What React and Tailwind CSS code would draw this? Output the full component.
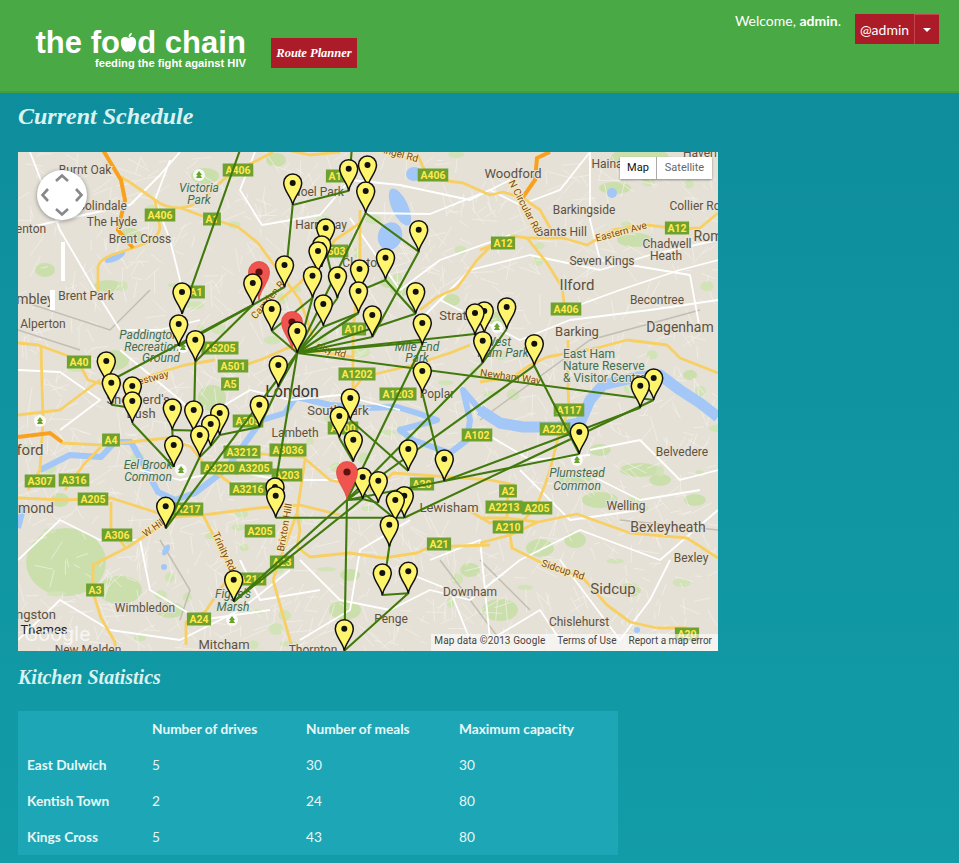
import React from 'react';

// map data is in page coordinates, the svg viewBox starts at the map corner
const yellowRoads = [
  'M98,300 L98,267 Q100,258 118,253 L133,248 L146,243 Q158,238 160,228 L155,200 L131,183 L121,177',
  'M155,200 Q165,208 181,208 L205,217 L238,227 L258,243 L280,273 L300,300 L313,337',
  'M181,208 Q200,205 212,190 L231,173 L258,160 L273,152',
  'M287,150 L310,155 L340,152',
  'M417,153 L423,167 Q430,178 440,180 L463,183 L490,195 L503,192 L523,198 L540,210 L553,233 L563,238',
  'M480,250 L493,245 L513,236 L527,238 L563,238 L587,245 L613,230 L647,225 L680,229 L700,228 L718,213',
  'M527,238 L547,263 L562,287 L565,310',
  'M420,310 L437,297 L457,288 L477,260 L490,247 L493,245',
  'M547,357 L597,348 L627,340 L667,345 L680,358 L718,373',
  'M480,382 L513,377 L530,365 L547,357',
  'M568,340 L568,387 L569,410 L560,430 L550,470 L545,485',
  'M230,370 L260,360 L290,347 L340,355 L353,357',
  'M353,330 L353,390 L363,377 L413,365 L450,353 L470,345',
  'M360,210 L360,267 L353,330',
  'M360,223 L335,240 L300,283 L280,300',
  'M18,343 L38,345 L71,357 L81,367 L88,380 L105,385 L130,384 L145,378 L168,370 L185,365 L215,360',
  'M41,347 L43,420 L40,470 L28,490',
  'M61,443 L101,445 L168,438 L191,447 L205,465 L240,490',
  'M101,447 L85,463 L65,490',
  'M18,498 L65,500 L111,498 L158,513 L175,517 L203,515 L258,508 L300,505 L340,515',
  'M166,522 L128,547 L93,565 L93,592 L101,618 L115,642 L115,651',
  'M111,502 L111,528 L125,547',
  'M203,515 L225,558 L235,568 L205,612 L186,622 L186,645',
  'M273,580 L293,651',
  'M273,580 L281,557 L297,513 L305,460',
  'M297,547 L310,557 L350,553 L383,558 L417,553 L430,547 L490,545',
  'M480,518 L507,518 L537,522',
  'M480,543 L510,535 L538,522 L577,514 L630,533 L687,538 L718,558',
  'M510,535 L512,548 L540,562 L583,578 L607,605 L630,622 L657,628 L687,628',
  'M508,485 L507,518',
  'M545,485 L537,505 L513,532',
  'M463,507 L490,523 L507,518',
  'M250,453 L303,457 L330,480 L375,490 L393,473 L490,480 L515,485',
  'M297,513 L300,530 L297,547',
  'M18,415 L60,410 L100,380',
];

const whiteRoads = [
  'M30,152 L60,230 L95,290 L120,330 L160,330 L200,320',
  'M18,230 L70,218 L130,205 L160,175 L180,152',
  'M170,160 L155,200 L170,240 L185,300',
  'M255,152 L240,190 L262,225 L320,215 L350,180 L400,185 L470,200 L510,180',
  'M365,213 L430,214 L490,190 L520,205 L560,190 L590,152',
  'M350,218 L400,290 L440,260 L510,235',
  'M420,320 L470,270 L530,255 L600,270 L650,255 L718,240',
  'M565,310 L620,290 L680,270 L718,260',
  'M590,152 L590,220 L600,260 L690,275 L700,330',
  'M440,300 L520,340 L570,320 L650,310 L718,300',
  'M18,370 L60,372 L100,400 L60,430',
  'M120,350 L180,400 L200,420 L250,390 L290,400 L340,395 L400,410',
  'M140,470 L180,480 L230,470 L280,480 L340,480',
  'M18,560 L60,520 L100,540 L140,540 L150,590 L200,620 L270,610',
  'M18,640 L60,600 L110,630 L180,640 L240,610 L290,570',
  'M300,560 L340,600 L390,610 L430,590 L470,600 L520,560 L580,530 L660,560 L718,510',
  'M430,560 L480,540 L490,640 L540,610 L560,640',
  'M560,560 L620,640 L650,600 L670,560',
  'M590,450 L640,440 L680,480 L718,470',
  'M580,470 L640,500 L700,490',
  'M520,470 L570,520 L640,510',
  'M480,430 L530,460 L590,455',
  'M400,570 L450,590 L470,640',
  'M300,640 L350,610 L360,550 L410,520',
  'M240,560 L260,600 L320,590',
];

const parks = [
  [66, 562, 40, 34], [120, 590, 22, 14], [130, 236, 12, 8], [108, 286, 14, 6], [205, 176, 14, 8],
  [388, 282, 8, 6], [276, 160, 10, 7], [400, 290, 10, 6], [452, 300, 8, 6], [635, 240, 18, 7],
  [640, 160, 30, 14], [615, 188, 16, 6], [500, 318, 12, 8], [115, 360, 14, 10], [212, 398, 14, 13],
  [575, 478, 16, 7], [600, 500, 18, 8], [540, 548, 14, 9], [575, 540, 11, 8], [630, 590, 11, 7],
  [345, 610, 16, 10], [350, 575, 10, 6], [470, 570, 10, 7], [500, 610, 18, 11], [640, 470, 20, 7],
  [695, 500, 11, 6], [690, 375, 7, 5], [60, 500, 9, 7], [170, 610, 14, 8], [45, 270, 10, 7],
  [600, 450, 11, 6], [660, 480, 11, 6],
];

const lakes = [
  [400, 207, 8, 20, -25], [390, 236, 12, 14, 20], [414, 174, 8, 7, 0], [115, 257, 11, 4, -25],
  [612, 193, 5, 5, 0], [166, 550, 3, 6, 30], [164, 567, 3, 3, 0], [637, 630, 3, 3, 0],
];

const shields = [
  ['A406', 238, 170], ['A406', 160, 215], ['A1', 212, 219], ['A406', 433, 175], ['A10', 338, 176],
  ['A12', 503, 243], ['A12', 677, 228], ['A406', 566, 309], ['A5205', 220, 348], ['A40', 79, 362],
  ['A501', 233, 366], ['A5', 230, 384], ['A4', 111, 440], ['A307', 40, 481], ['A316', 74, 480],
  ['A3212', 242, 452], ['A3220', 219, 468], ['A3205', 254, 468], ['A3216', 248, 489], ['A3036', 288, 450],
  ['A203', 287, 475], ['A205', 93, 499], ['A217', 188, 509], ['A306', 117, 535], ['A3', 95, 590],
  ['A24', 199, 619], ['A205', 260, 531], ['A23', 282, 562], ['A214', 251, 579], ['A10', 354, 329],
  ['A1202', 357, 374], ['A1203', 398, 394], ['A100', 343, 428], ['A102', 477, 435], ['A20', 422, 484],
  ['A21', 439, 544], ['A2', 508, 491], ['A2213', 504, 507], ['A205', 537, 508], ['A210', 508, 527],
  ['A117', 569, 410], ['A220', 555, 429], ['A20', 687, 634], ['A1', 196, 292], ['A503', 333, 251],
  ['A305', 248, 421],
];

// [text, x, y, size]
const labels = [
  ['Burnt Oak', 85, 174], ['Colindale', 102, 210], ['The Hyde', 112, 226], ['Brent Cross', 140, 243],
  ['Brent Park', 86, 300], ['mbley', 35, 304, 14], ['Alperton', 43, 328], ['enton', 31, 233], ['Noel Park', 318, 196],
  ['Harringay', 321, 229], ['Clapton', 363, 267], ['Woodford', 513, 178, 13], ['Haina', 607, 168], ['Barkingside', 584, 214],
  ['Gants Hill', 561, 236], ['Chadwell', 667, 248], ['Heath', 666, 260], ['Seven Kings', 602, 265], ['Ilford', 577, 290, 15],
  ['Becontree', 657, 304], ['Collier Ro', 695, 210], ['Rom', 708, 241, 14], ['Haveri', 700, 157], ['Dagenham', 680, 332, 14],
  ['Barking', 577, 336, 13], ['Belvedere', 682, 456], ['Welling', 626, 510], ['Bexleyheath', 668, 532, 14], ['Bexley', 691, 562],
  ['Sidcup', 613, 594, 15], ['Chislehurst', 579, 626], ['Lewisham', 449, 512, 13], ['Downham', 470, 596], ['Penge', 391, 623],
  ['Mitcham', 224, 649, 13], ['Wimbledon', 145, 612], ['ngston', 36, 619, 13], ['New Malden', 88, 654], ['mond', 36, 513, 14],
  ['ford', 30, 455, 15], ["Shepherd's", 138, 404, 13], ['Bush', 141, 418, 13], ['Lambeth', 295, 437], ['Southwark', 338, 415, 13],
  ['Poplar', 437, 398], ['Strat', 453, 320, 13], ['Thornton', 313, 654],
];

const parkLabels = [
  ['Victoria', 199, 192], ['Park', 199, 204], ['Paddington', 149, 339], ['Recreation', 152, 351], ['Ground', 161, 362],
  ['Mile End', 417, 351], ['Park', 417, 362], ['West', 498, 346], ['Ham Park', 503, 357], ['Eel Brook', 148, 469],
  ['Common', 148, 481], ['Figge\'s', 233, 598], ['Marsh', 233, 611], ['Plumstead', 577, 477], ['Common', 577, 490],
];

const roadNames = [
  ['Trinity Rd', 221, 553, 65], ['W Hill', 156, 530, -35], ['Sidcup Rd', 562, 573, 18], ['N Circular Rd', 522, 208, 62],
  ['Westway', 150, 382, -15], ['Newham Way', 510, 380, 8], ['Angel Rd', 398, 157, 15], ['City Rd', 330, 354, 15],
  ['Camden Rd', 272, 300, -50], ['Brixton Hill', 288, 528, -80], ['Eastern Ave', 622, 235, -15],
];

const routes = [
  [[262, 150], [240, 150], [182, 314]],
  [[106, 383], [252.8, 305]], [[178.7, 346], [252.8, 305]], [[195.3, 361.7], [252.8, 305]],
  [[195.3, 361.7], [193.7, 432]], [[111.3, 404.7], [132.3, 408]], [[132.3, 423], [173.7, 467]],
  [[173.7, 467], [172.3, 430], [210.7, 431]], [[199.7, 457], [210.7, 446], [219.7, 435], [259.3, 427], [278.3, 387], [297.3, 353]],
  [[297.3, 353], [275, 487]], [[275.7, 517.7], [404.3, 517.7]], [[404.3, 517.7], [653.7, 400]],
  [[297.3, 353], [653.7, 400]],
  [[534.3, 365.7], [579.3, 454]], [[534.3, 365.7], [347, 500]], [[482.7, 362.7], [347, 500]], [[422.3, 345], [347, 500]],
  [[482.7, 362.7], [506.7, 329]], [[482.7, 362.7], [475, 335]], [[482.7, 362.7], [484.3, 333]],
  [[297.3, 353], [358.5, 313]], [[297.3, 353], [415.7, 313.7]], [[297.3, 353], [372.3, 337]], [[297.3, 353], [422.3, 342]],
  [[297.3, 353], [484.3, 333]], [[297.3, 353], [323, 327]], [[297.3, 353], [365.7, 213]], [[297.3, 353], [312.5, 297.7]],
  [[297.3, 353], [337.5, 298]], [[297.3, 353], [271.7, 331]], [[271.7, 331], [312.5, 297.7], [318, 273]],
  [[325.7, 250], [337.5, 298]], [[252.8, 305], [284.5, 287], [292.7, 205], [348.7, 190.7], [351.7, 150]],
  [[365.7, 213], [418.7, 251.7], [372.3, 337]], [[385.5, 280], [359, 291]], [[385.5, 280], [415.7, 313.7]],
  [[358.5, 313], [323, 327]], [[353.3, 461.7], [339.3, 438]], [[350.3, 420], [408.3, 471]], [[422.3, 393], [444.3, 481]],
  [[347, 500], [444.3, 481], [579.3, 454]], [[444.3, 481], [640.3, 407.7]], [[347, 500], [362.7, 499], [378.3, 503]],
  [[362, 492], [395.3, 519], [389.3, 546.7], [382.3, 595], [408.3, 593.3], [344.3, 650.7]], [[347, 500], [344.3, 650.7]],
  [[233.7, 601.7], [347, 500]], [[233.7, 601.7], [362.7, 499]], [[165.7, 528.3], [199.7, 457]], [[165.7, 528.3], [297.3, 353]],
];

const yellowPins = [
  [292.7, 205], [348.7, 190.7], [367.5, 187], [365.7, 213], [418.7, 251.7], [325.7, 250], [321.7, 267], [318, 273],
  [284.5, 287], [312.5, 297.7], [337.5, 298], [359.5, 291], [385.5, 279.7], [358.5, 313], [415.7, 313.7], [323.3, 326],
  [372.3, 337], [422.3, 345], [271.7, 331], [475, 335], [484.3, 333], [252.8, 305], [506.7, 329], [182, 314],
  [178.7, 346], [195.3, 361.7], [106.3, 383], [111.3, 404.7], [132.3, 408], [132.3, 423], [172.3, 430], [193.7, 432],
  [219.7, 435], [210.7, 446], [199.7, 457], [173.7, 467], [259.3, 426.7], [278.3, 387], [297.3, 353], [422.3, 393],
  [350.3, 420], [339.3, 438], [353.3, 461.7], [408.3, 471], [444.3, 481], [362.7, 499], [378.3, 502.7], [404.3, 517.7],
  [395.3, 522], [389.3, 546.7], [275, 509], [275.7, 517.7], [382.3, 595], [408.3, 593.3], [344.3, 650.7], [534.3, 365.7],
  [482.7, 362.7], [653.7, 400], [640.3, 407.7], [579.3, 454], [165.7, 528.3], [233.7, 601.7],
];
const redPins = [[259, 300], [292, 350], [347, 500]];

const stats = [
  ['East Dulwich', 5, 30, 30],
  ['Kentish Town', 2, 24, 80],
  ['Kings Cross', 5, 43, 80],
];

// street mesh and small green patches, seeded so every render gives the same picture
function makeTexture() {
  let seed = 4217;
  const rnd = () => {
    seed = (seed * 16807) % 2147483647;
    return seed / 2147483647;
  };
  let streets = '';
  for (let i = 0; i < 1500; i++) {
    const x = 18 + rnd() * 700;
    const y = 152 + rnd() * 499;
    const a = rnd() * Math.PI;
    const l = 6 + rnd() * 20;
    streets += `M${x.toFixed(1)},${y.toFixed(1)}l${(Math.cos(a) * l).toFixed(1)},${(Math.sin(a) * l).toFixed(1)}`;
  }
  const patches = [];
  for (let i = 0; i < 90; i++) {
    patches.push([18 + rnd() * 700, 152 + rnd() * 499, 3 + rnd() * 7, 2 + rnd() * 4]);
  }
  return { streets, patches };
}
const texture = makeTexture();

const labelClass = 'font-["Roboto",sans-serif] fill-[#5f5140] stroke-[#e6e2d8] stroke-[2px] [paint-order:stroke]';
const parkClass = 'font-["Roboto",sans-serif] fill-[#3f6f52] stroke-[#e6e2d8] stroke-[2px] [paint-order:stroke]';

const Pin = ({ x, y }) => (
  <g transform={`translate(${x},${y})`}>
    <path d="M0,0 C-1,-8 -9,-14 -9,-22 A9,9 0 1 1 9,-22 C9,-14 1,-8 0,0Z" fill="#fff56c" stroke="#111" strokeWidth="1.5" />
    <circle cy="-22" r="3" fill="#111" />
  </g>
);

const RedPin = ({ x, y }) => (
  <g transform={`translate(${x},${y})`}>
    <path d="M0,0 C-1,-10 -10.5,-18 -10.5,-28 A10.5,10.5 0 1 1 10.5,-28 C10.5,-18 1,-10 0,0Z" fill="#f0544e" stroke="#d8423c" strokeWidth="0.7" />
    <circle cy="-28" r="3.6" fill="#5c1210" />
  </g>
);

const MapDrawing = () => {
  const pins = [
    ...yellowPins.map(([x, y]) => ({ x, y, red: false })),
    ...redPins.map(([x, y]) => ({ x, y, red: true })),
  ].sort((a, b) => a.y - b.y);

  return (
    <svg viewBox="18 152 700 499" className="block w-[700px] h-[499px]">
      <rect x="18" y="152" width="700" height="499" fill="#e5e1d7" />
      {parks.map(([cx, cy, rx, ry], i) => (
        <ellipse key={i} cx={cx} cy={cy} rx={rx} ry={ry} fill="#cbdfac" />
      ))}
      {texture.patches.map(([cx, cy, rx, ry], i) => (
        <ellipse key={i} cx={cx} cy={cy} rx={rx} ry={ry} fill="#d2e3b8" />
      ))}
      <path d={texture.streets} stroke="#f6f4ee" strokeWidth="0.7" fill="none" opacity="0.85" />
      <path d="M18,300 L110,330 L150,290 M18,330 L80,350 M700,310 L590,340 L480,420 M480,560 L530,610 M160,540 L190,590 L180,620 M500,640 L440,560 M620,520 L718,530" stroke="#c2beb4" strokeWidth="1.5" fill="none" />
      {/* thames */}
      <path
        d="M18,528 L24,505 M40,470 L70,455 L101,457 L115,442 L131,442 L141,460 L158,492 L175,500 L195,493 L225,470 L240,450 L262,420 L285,413 L296,397 L330,405 L367,408 L397,407 L417,413 L437,420 L400,430 L413,440 L450,453 L467,440 L470,420 L463,390 L480,410 L500,423"
        stroke="#a3c7f7"
        strokeWidth="6"
        strokeLinejoin="round"
        fill="none"
      />
      <path
        d="M480,410 L500,423 L523,427 L557,427 L580,423 L590,400 L603,385 L637,377 L660,375 L680,390 L700,403 L718,417"
        stroke="#a3c7f7"
        strokeWidth="11"
        strokeLinejoin="round"
        fill="none"
      />
      {lakes.map(([cx, cy, rx, ry, rot], i) => (
        <ellipse key={i} cx={cx} cy={cy} rx={rx} ry={ry} fill="#a3c7f7" transform={`rotate(${rot} ${cx} ${cy})`} />
      ))}
      {whiteRoads.map((d, i) => (
        <path key={i} d={d} stroke="#fff" strokeWidth="1.8" strokeLinejoin="round" fill="none" />
      ))}
      {yellowRoads.map((d, i) => (
        <path key={i} d={d} stroke="#f8cf62" strokeWidth="2.8" strokeLinejoin="round" fill="none" />
      ))}
      <path d="M103,150 L121,180 L125,200 L118,230 L133,248" stroke="#f9a11f" strokeWidth="4" fill="none" />
      <path d="M550,152 L537,158 L535,180 L523,197" stroke="#f9a11f" strokeWidth="4" fill="none" />
      <path d="M18,437 L50,433 L62,442" stroke="#f9a11f" strokeWidth="4" fill="none" />

      {labels.map(([t, x, y, size], i) => (
        <text key={i} x={x} y={y} textAnchor="middle" fontSize={size || 12} className={labelClass}>{t}</text>
      ))}
      {parkLabels.map(([t, x, y], i) => (
        <text key={i} x={x} y={y} textAnchor="middle" fontSize="12" fontStyle="italic" className={parkClass}>{t}</text>
      ))}
      <text x="563" y="358" fontSize="12" className={parkClass}>East Ham</text>
      <text x="563" y="370" fontSize="12" className={parkClass}>Nature Reserve</text>
      <text x="563" y="382" fontSize="12" className={parkClass}>&amp; Visitor Centre</text>
      {roadNames.map(([t, x, y, rot], i) => (
        <text key={i} x={x} y={y} textAnchor="middle" fontSize="10" transform={`rotate(${rot} ${x} ${y})`} className='font-["Roboto",sans-serif] fill-[#7a4a1c] stroke-[#f9e7b0] stroke-[2px] [paint-order:stroke]'>{t}</text>
      ))}
      <text x="292" y="397" textAnchor="middle" fontSize="16" className='font-["Roboto",sans-serif] fill-[#333] stroke-[#e6e2d8] stroke-[2px] [paint-order:stroke]'>London</text>
      <text x="44" y="634" textAnchor="middle" fontSize="13" className='font-["Roboto",sans-serif] fill-[#222] stroke-[#e6e2d8] stroke-[2px] [paint-order:stroke]'>Thames</text>

      {[[199, 175], [181, 470], [40, 421], [232, 620], [577, 460], [497, 327], [183, 347]].map(([x, y], i) => (
        <g key={i}>
          <circle cx={x} cy={y} r="6" fill="#fff" opacity="0.85" />
          <path d={`M${x},${y - 4} l3,4 h-1.6 l1.6,3 h-6 l1.6,-3 h-1.6z`} fill="#6aa32c" />
        </g>
      ))}

      {shields.map(([t, x, y], i) => {
        const w = t.length * 6.4 + 5;
        return (
          <g key={i}>
            <rect x={x - w / 2} y={y - 6.5} width={w} height="13" fill="#6fa12e" />
            <text x={x} y={y + 4} textAnchor="middle" fontSize="10.5" fontWeight="700" className='font-["Roboto",sans-serif] fill-[#ffe94f]'>{t}</text>
          </g>
        );
      })}

      {routes.map((r, i) => (
        <polyline key={i} points={r.map((p) => p.join(',')).join(' ')} fill="none" stroke="#41790c" strokeWidth="2.1" strokeLinejoin="round" />
      ))}
      {pins.map((p, i) => (p.red ? <RedPin key={i} x={p.x} y={p.y} /> : <Pin key={i} x={p.x} y={p.y} />))}
    </svg>
  );
};

const Logo = () => (
  <div className="flex flex-col items-end w-[209px] text-white font-['Liberation_Sans',sans-serif] font-bold">
    <div className="flex items-center h-[30px] text-[31px] leading-none tracking-[0.05px] whitespace-pre">
      <span>the fo</span>
      <svg viewBox="0 0 20 24" className="w-[17px] h-[21px] mt-[1px]">
        <path d="M10,7 C7,4 1,5 1,12 C1,18 5,23 7.5,23 C9,23 9,22.4 10,22.4 C11,22.4 11,23 12.5,23 C15,23 19,18 19,12 C19,5 13,4 10,7Z M10,6 C10,3 11.5,1 14,0.5 C14,3 12.5,5.5 10,6Z" fill="#fff" />
      </svg>
      <span>d chain</span>
    </div>
    <div className="text-[11.2px] leading-none whitespace-nowrap mt-[1px]">feeding the fight against HIV</div>
  </div>
);

const App = () => {
  return (
    <div className="h-[863px] overflow-hidden bg-gradient-to-b from-[#0e8c9b] to-[#129ca8] font-['Lato',sans-serif] text-white">
      <header className="flex h-[93px] items-start bg-[#49a944] border-b-2 border-[#439f3e] pl-[37px] pr-[20px]">
        <div className="mt-[27px]">
          <Logo />
        </div>
        <div className="ml-[25px] mt-[38px] flex h-[30px] w-[86px] items-center justify-center bg-[#ab1c28] font-['Liberation_Serif',serif] text-[12.5px] font-bold italic">
          Route Planner
        </div>
        <div className="ml-auto mt-[12px] text-[14px] leading-[18px]">
          Welcome, <b>admin</b>.
        </div>
        <div className="ml-[14px] mt-[14px] flex h-[30px] items-stretch bg-[#ab1c28] text-[14px]">
          <span className="flex w-[59px] items-center justify-center">@admin</span>
          <span className="flex w-[25px] items-center justify-center border-l border-t border-[#c4444e]">
            <span className="border-x-[4px] border-t-[4px] border-x-transparent border-t-white" />
          </span>
        </div>
      </header>

      <main className="px-[18px]">
        <h1 className="mt-[8px] h-[51px] font-['Liberation_Serif',serif] text-[24px] font-bold italic leading-[30px] text-[#d9f3f3]">
          Current Schedule
        </h1>
        <div className="relative w-[700px] h-[499px]">
          <MapDrawing />
          {/* pan control */}
          <div className="absolute left-[19px] top-[18px] flex h-[50px] w-[50px] items-center justify-center rounded-full bg-white shadow-[0_1px_4px_rgba(0,0,0,0.4)]">
            <svg viewBox="0 0 50 50" className="w-[50px] h-[50px]" fill="none" stroke="#888" strokeWidth="2.6">
              <path d="M19,11 L25,5.5 L31,11 M11,19 L5.5,25 L11,31 M39,19 L44.5,25 L39,31 M19,39 L25,44.5 L31,39" />
            </svg>
          </div>
          <div className="absolute left-[43px] top-[90px] h-[39px] w-[4px] bg-white" />
          <div className="absolute left-[32px] top-[138px] h-[20px] w-[5px] bg-white" />
          {/* map type */}
          <div className="absolute left-[602px] top-[5px] flex h-[22px] w-[92px] bg-white text-[11px] leading-[22px] font-['Roboto',sans-serif] shadow-[0_1px_2px_rgba(0,0,0,0.4)]">
            <span className="w-[37px] border-r border-[#aaa] text-center text-[#111]">Map</span>
            <span className="flex-1 text-center text-[#666]">Satellite</span>
          </div>
          <div className="absolute left-[6px] bottom-[5px] font-['Roboto',sans-serif] text-[21px] leading-[24px] text-white/70">Google</div>
          <div className="absolute right-0 bottom-0 flex h-[17px] items-start gap-[12px] bg-white/60 pl-[3px] pr-[6px] pt-[1px] font-['Roboto',sans-serif] text-[10px] leading-[12px] text-[#444] whitespace-nowrap">
            <span className="tracking-[0.1px]">Map data ©2013 Google</span>
            <span>Terms of Use</span>
            <span>Report a map error</span>
          </div>
        </div>

        <h2 className="mt-[13px] h-[47px] font-['Liberation_Serif',serif] text-[20px] font-bold italic leading-[26px] text-[#d9f3f3]">
          Kitchen Statistics
        </h2>
        <table className="w-[600px] table-fixed bg-[#1da6b5] text-[13.7px] text-[#e6f7f7]">
          <colgroup>
            <col className="w-[134px]" />
            <col className="w-[154px]" />
            <col className="w-[153px]" />
            <col />
          </colgroup>
          <thead>
            <tr className="h-[36px]">
              <th />
              <th className="text-left font-bold">Number of drives</th>
              <th className="text-left font-bold">Number of meals</th>
              <th className="text-left font-bold">Maximum capacity</th>
            </tr>
          </thead>
          <tbody>
            {stats.map((row) => (
              <tr key={row[0]} className="h-[36px]">
                <td className="pl-[9px] font-bold">{row[0]}</td>
                <td>{row[1]}</td>
                <td>{row[2]}</td>
                <td>{row[3]}</td>
              </tr>
            ))}
          </tbody>
        </table>
      </main>
    </div>
  );
};

export default App;
